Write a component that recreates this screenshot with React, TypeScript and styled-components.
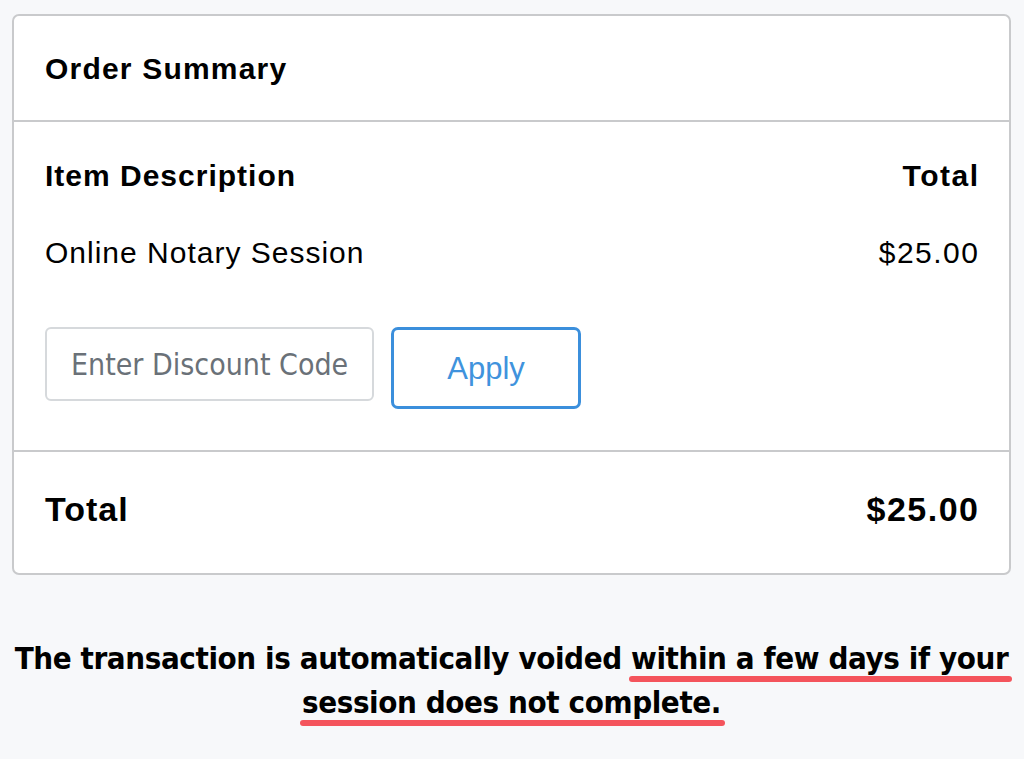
import React from "react";
import styled, { createGlobalStyle } from "styled-components";

const Global = createGlobalStyle`
  html, body { margin: 0; padding: 0; background: #f7f8fa; }
  body { font-family: "Liberation Sans", Arial, sans-serif; color: #000; }
  * { box-sizing: border-box; }
`;

const Page = styled.div`
  width: 1024px;
  height: 759px;
  padding: 14px 13px 0 12px;
  display: flex;
  flex-direction: column;
`;

const Card = styled.div`
  background: #fff;
  border: 2px solid #c9cacc;
  border-radius: 7px;
  display: flex;
  flex-direction: column;
`;

const Header = styled.div`
  height: 106px;
  padding: 2px 0 0 31px;
  display: flex;
  align-items: center;
  border-bottom: 2px solid #c9cacc;
  font-size: 30px;
  font-weight: 700;
  letter-spacing: 1.2px;
`;

const Body = styled.div`
  padding: 37px 31px 41px 31px;
  border-bottom: 2px solid #c9cacc;
  display: flex;
  flex-direction: column;
`;

const Row = styled.div<{ $bold?: boolean; $size?: number }>`
  display: flex;
  justify-content: space-between;
  align-items: center;
  font-size: ${(p) => p.$size ?? 30}px;
  font-weight: ${(p) => (p.$bold ? 700 : 400)};
  letter-spacing: 1px;
  line-height: 34px;
`;

const Amount = styled.span`
  letter-spacing: 1.5px;
  margin-right: -1.5px;
`;

const ItemRow = styled(Row)`
  margin-top: 43px;
`;

const DiscountRow = styled.div`
  margin-top: 57px;
  display: flex;
  align-items: flex-start;
  gap: 17px;
`;

const Input = styled.input`
  width: 329px;
  height: 74px;
  border: 2px solid #d6d9dc;
  border-radius: 6px;
  padding: 0 0 0 24px;
  font-family: "Liberation Sans Narrow", "DejaVu Sans Condensed", "Liberation Sans", sans-serif;
  font-size: 30px;
  color: #333;
  outline: none;
  &::placeholder { color: #6a7178; }
`;

const ApplyButton = styled.button`
  width: 190px;
  height: 82px;
  border: 3px solid #3b8fdc;
  border-radius: 7px;
  background: #fff;
  color: #3f93dd;
  font-family: "Liberation Sans", Arial, sans-serif;
  font-size: 31px;
  padding: 2px 0 0;
`;

const Footer = styled.div`
  height: 121px;
  padding: 0 31px 8px;
  display: flex;
  align-items: center;
`;

const FooterRow = styled(Row)`
  width: 100%;
`;

const Notice = styled.div`
  margin-top: 61px;
  display: flex;
  flex-direction: column;
  align-items: center;
  font-family: "Liberation Sans Narrow", "DejaVu Sans Condensed", "Liberation Sans", sans-serif;
  font-weight: 700;
  font-size: 31px;
  line-height: 44px;
  letter-spacing: -0.4px;
  text-align: center;
`;

const Line = styled.div`
  white-space: nowrap;
`;

const Marked = styled.span`
  position: relative;
  &::after {
    content: "";
    position: absolute;
    left: -2px;
    right: -4px;
    bottom: -6px;
    height: 6px;
    border-radius: 3px;
    background: #f4545c;
  }
`;

export default function App() {
  return (
    <>
      <Global />
      <Page>
        <Card>
          <Header>Order Summary</Header>
          <Body>
            <Row $bold>
              <span>Item Description</span>
              <Amount>Total</Amount>
            </Row>
            <ItemRow>
              <span>Online Notary Session</span>
              <Amount>$25.00</Amount>
            </ItemRow>
            <DiscountRow>
              <Input placeholder="Enter Discount Code" />
              <ApplyButton>Apply</ApplyButton>
            </DiscountRow>
          </Body>
          <Footer>
            <FooterRow $bold $size={34}>
              <span>Total</span>
              <Amount>$25.00</Amount>
            </FooterRow>
          </Footer>
        </Card>
        <Notice>
          <Line>
            The transaction is automatically voided <Marked>within a few days if your</Marked>
          </Line>
          <Line>
            <Marked>session does not complete.</Marked>
          </Line>
        </Notice>
      </Page>
    </>
  );
}
